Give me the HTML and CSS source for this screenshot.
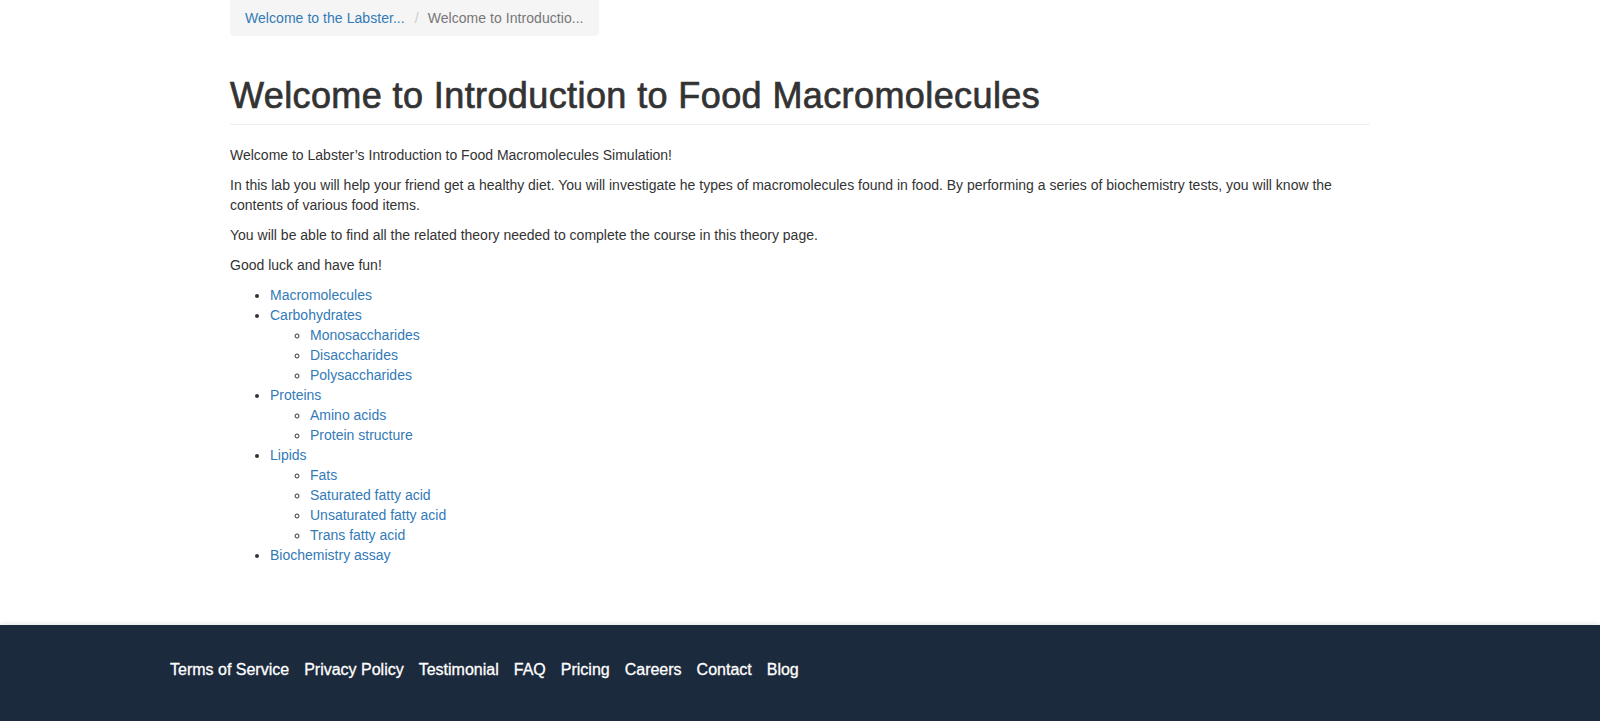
FILE: index.html
```html
<!DOCTYPE html>
<html lang="en">
<head>
<meta charset="utf-8">
<title>Welcome to Introduction to Food Macromolecules</title>
<link rel="stylesheet" href="styles.css">
</head>
<body>
<main class="container">
  <ol class="breadcrumb">
    <li><a href="#">Welcome to the Labster...</a></li>
    <li class="active">Welcome to Introductio...</li>
  </ol>
  <div class="page-header">
    <h1>Welcome to Introduction to Food Macromolecules</h1>
  </div>
  <p>Welcome to Labster’s Introduction to Food Macromolecules Simulation!</p>
  <p>In this lab you will help your friend get a healthy diet. You will investigate he types of macromolecules found in food. By performing a series of biochemistry tests, you will know the contents of various food items.</p>
  <p>You will be able to find all the related theory needed to complete the course in this theory page.</p>
  <p>Good luck and have fun!</p>
  <ul class="toc">
    <li><a href="#">Macromolecules</a></li>
    <li><a href="#">Carbohydrates</a>
      <ul>
        <li><a href="#">Monosaccharides</a></li>
        <li><a href="#">Disaccharides</a></li>
        <li><a href="#">Polysaccharides</a></li>
      </ul>
    </li>
    <li><a href="#">Proteins</a>
      <ul>
        <li><a href="#">Amino acids</a></li>
        <li><a href="#">Protein structure</a></li>
      </ul>
    </li>
    <li><a href="#">Lipids</a>
      <ul>
        <li><a href="#">Fats</a></li>
        <li><a href="#">Saturated fatty acid</a></li>
        <li><a href="#">Unsaturated fatty acid</a></li>
        <li><a href="#">Trans fatty acid</a></li>
      </ul>
    </li>
    <li><a href="#">Biochemistry assay</a></li>
  </ul>
</main>
<footer class="footer">
  <nav class="footer-inner">
    <a href="#">Terms of Service</a>
    <a href="#">Privacy Policy</a>
    <a href="#">Testimonial</a>
    <a href="#">FAQ</a>
    <a href="#">Pricing</a>
    <a href="#">Careers</a>
    <a href="#">Contact</a>
    <a href="#">Blog</a>
  </nav>
</footer>
</body>
</html>
```
FILE: styles.css
```css
* { box-sizing: border-box; }
html, body { margin: 0; padding: 0; }
body {
  font-family: "Liberation Sans", Arial, Helvetica, sans-serif;
  font-size: 14px;
  line-height: 20px;
  color: #333;
  background: #fff;
}
a { color: #337ab7; text-decoration: none; }

.container {
  width: 1170px;
  margin: 0 auto;
  padding: 0 15px 50px;
}

.breadcrumb {
  list-style: none;
  margin: 0 0 20px;
  padding: 8px 15px;
  width: 369px;
  background: #f5f5f5;
  border-radius: 0 0 4px 4px;
  display: flex;
}
.breadcrumb li { white-space: nowrap; letter-spacing: 0.05px; }
.breadcrumb li + li::before {
  content: "/";
  color: #ccc;
  padding: 0 9px 0 10px;
}
.breadcrumb .active { color: #777; }

.page-header {
  margin: 40px 0 20px;
  padding-bottom: 8px;
  border-bottom: 1px solid #eee;
}
.page-header h1 {
  margin: 0;
  font-size: 36px;
  line-height: 1.1;
  font-weight: normal;
  letter-spacing: 0.4px;
  -webkit-text-stroke: 0.7px #333;
  color: #333;
}

p { margin: 0 0 10px; }

.toc {
  margin: 0 0 10px;
  padding-left: 40px;
}
.toc ul {
  margin: 0;
  padding-left: 40px;
  list-style-type: circle;
}

.footer {
  background: #1b2a3c;
  box-shadow: 0 -2px 4px rgba(0, 0, 0, 0.08);
  height: 97px;
  padding-top: 35px;
}
.footer-inner {
  width: 1260px;
  margin: 0 auto;
  display: flex;
  gap: 15px;
}
.footer-inner a {
  color: #fff;
  font-size: 16px;
  line-height: 20px;
  -webkit-text-stroke: 0.3px #fff;
}
```
